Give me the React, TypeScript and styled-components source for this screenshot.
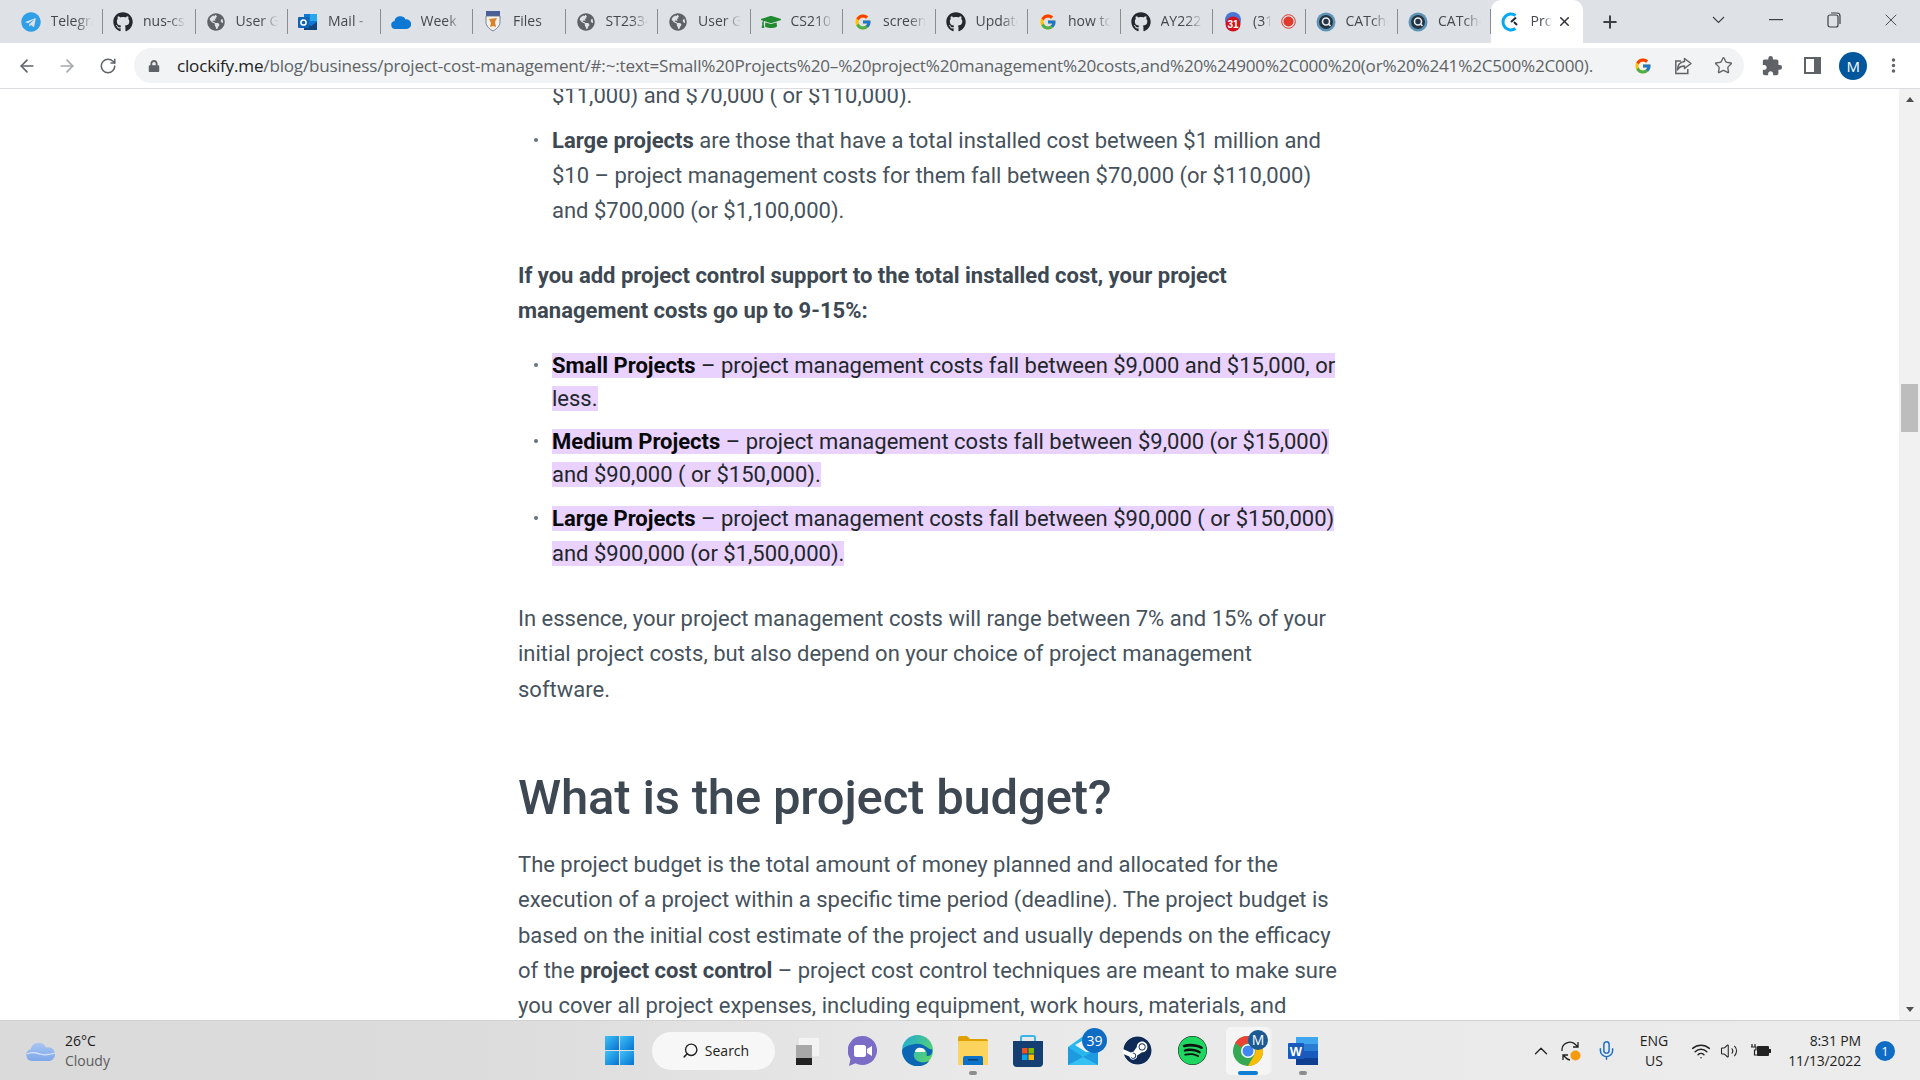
import React from "react";
import styled, { createGlobalStyle } from "styled-components";
import { ArrowLeft, ArrowRight, ChevronUp, EllipsisVertical, Mic, Plus, RotateCw, Search, Star, Volume2, Wifi, X } from "lucide-react";
import { FaGithub, FaGlobeAmericas, FaGraduationCap, FaLock, FaSpotify, FaSteam, FaTelegram } from "react-icons/fa";
import { FcGoogle } from "react-icons/fc";

const GlobalStyle = createGlobalStyle`
  html, body {
    margin: 0;
    height: 100%;
    overflow: hidden;
    background: #fff;
  }
  #root {
    height: 100%;
  }
`;

const Page = styled.div`
  width: 1920px;
  height: 1080px;
  display: flex;
  flex-direction: column;
  font-family: "Open Sans", "Noto Sans", sans-serif;
  overflow: hidden;
`;

/* ---------- browser chrome ---------- */

const TabStrip = styled.div`
  height: 43px;
  flex: none;
  display: flex;
  align-items: stretch;
  padding-left: 10.5px;
  background: #dee1e6;
`;

const Tab = styled.div<{ $active?: boolean }>`
  position: relative;
  width: 92.5px;
  flex: none;
  box-sizing: border-box;
  display: flex;
  align-items: center;
  gap: 10px;
  padding: 0 ${(p) => (p.$active ? "11px" : "10px")} 0 10px;
  background: ${(p) => (p.$active ? "#fff" : "transparent")};
  border-radius: ${(p) => (p.$active ? "10px 10px 0 0" : "0")};
  &::after {
    content: "";
    display: ${(p) => (p.$active ? "none" : "block")};
    position: absolute;
    right: 0;
    top: 9px;
    bottom: 9px;
    width: 1px;
    background: #8a8d91;
  }
`;

const TabIcon = styled.span`
  width: 20px;
  height: 20px;
  flex: none;
  display: flex;
  align-items: center;
  justify-content: center;
`;

const TabLabel = styled.span`
  flex: 1;
  min-width: 0;
  padding-bottom: 2px;
  overflow: hidden;
  white-space: nowrap;
  font-size: 14px;
  color: #45494e;
  -webkit-mask-image: linear-gradient(90deg, #000 60%, transparent 100%);
  mask-image: linear-gradient(90deg, #000 60%, transparent 100%);
`;

const TabClose = styled.span`
  width: 16px;
  flex: none;
  display: flex;
  justify-content: center;
  margin-left: -6px;
  color: #303134;
`;

const NewTab = styled.div`
  width: 54px;
  flex: none;
  display: flex;
  align-items: center;
  justify-content: center;
  color: #3c4043;
`;

const WindowControls = styled.div`
  margin-left: auto;
  display: flex;
  padding-bottom: 4px;
`;

const WindowButton = styled.div`
  width: 57.5px;
  display: flex;
  align-items: center;
  justify-content: center;
  color: #3c4043;
`;

const Toolbar = styled.div`
  height: 45px;
  flex: none;
  box-sizing: border-box;
  display: flex;
  align-items: center;
  padding-left: 6.5px;
  background: #fff;
  color: #5f6368;
`;

const ToolButton = styled.div<{ $faded?: boolean }>`
  width: 40.5px;
  flex: none;
  display: flex;
  align-items: center;
  justify-content: center;
  color: ${(p) => (p.$faded ? "#a5a8ac" : "#5f6368")};
`;

const AddressBar = styled.div`
  width: 1610px;
  height: 35px;
  flex: none;
  box-sizing: border-box;
  margin: 0 8px 0 6px;
  padding: 0 0 0 14px;
  display: flex;
  align-items: center;
  border-radius: 18px;
  background: #f1f3f4;
`;

const Url = styled.div`
  flex: 1;
  min-width: 0;
  margin-left: 17px;
  white-space: nowrap;
  overflow: hidden;
  font-size: 17.1px;
  letter-spacing: -0.2px;
  color: #5f6368;
  b {
    font-weight: 400;
    color: #202124;
  }
`;

const Avatar = styled.div`
  width: 28px;
  height: 28px;
  border-radius: 50%;
  display: flex;
  align-items: center;
  justify-content: center;
  font-size: 15px;
  color: #fff;
  background: #02569b;
`;

/* ---------- page content ---------- */

const Viewport = styled.div`
  flex: 1;
  min-height: 0;
  display: flex;
  border-top: 1px solid #dadce0;
  overflow: hidden;
  background: #fff;
`;

const ArticleArea = styled.div`
  flex: 1;
  min-width: 0;
  padding-left: 518px;
`;

const Article = styled.article`
  width: 824px;
  margin-top: -11.5px;
  font-family: Roboto, "Noto Sans", sans-serif;
  font-size: 22px;
  line-height: 35.3px;
  color: #46525c;
`;

const Paragraph = styled.p<{ $top?: number }>`
  margin: ${(p) => p.$top ?? 29}px 0 0;
`;

const StrongLead = styled.strong`
  font-weight: 700;
  color: #3d4852;
`;

const BulletList = styled.ul<{ $top?: number }>`
  list-style: none;
  margin: ${(p) => p.$top ?? 10}px 0 0;
  padding: 0 0 0 34px;
`;

const Bullet = styled.li<{ $line?: number; $plain?: boolean }>`
  position: relative;
  margin-top: 10px;
  line-height: ${(p) => p.$line ?? 35.3}px;
  &:first-child {
    margin-top: 0;
  }
  &::before {
    content: "";
    display: ${(p) => (p.$plain ? "none" : "block")};
    position: absolute;
    left: -18px;
    top: ${(p) => ((p.$line ?? 35.3) - 5) / 2}px;
    width: 4px;
    height: 4px;
    border-radius: 50%;
    background: #66727b;
  }
`;

const Mark = styled.mark`
  background: #e9d2fd;
  color: #22262a;
  strong {
    color: #08090a;
  }
`;

const Heading = styled.h2`
  margin: 61px 0 19px;
  font-size: 49px;
  line-height: 60px;
  letter-spacing: -0.18px;
  font-weight: 500;
  color: #3d4852;
`;

const ScrollBar = styled.div`
  width: 21px;
  flex: none;
  display: flex;
  flex-direction: column;
  align-items: center;
  background: #f1f1f1;
`;

const ScrollArrow = styled.div<{ $down?: boolean }>`
  width: 0;
  height: 0;
  margin-top: ${(p) => (p.$down ? "auto" : "8px")};
  margin-bottom: ${(p) => (p.$down ? "8px" : "0")};
  border-left: 4.5px solid transparent;
  border-right: 4.5px solid transparent;
  border-bottom: ${(p) => (p.$down ? "0" : "5px solid #505050")};
  border-top: ${(p) => (p.$down ? "5px solid #505050" : "0")};
`;

const ScrollThumb = styled.div`
  width: 17px;
  height: 48px;
  margin-top: 282px;
  background: #bdbdbd;
`;

/* ---------- taskbar ---------- */

const Taskbar = styled.div`
  height: 60px;
  flex: none;
  box-sizing: border-box;
  display: flex;
  align-items: center;
  border-top: 1px solid #d2d2d2;
  background: linear-gradient(90deg, #dadada 0%, #dcdcdc 25%, #e9e9e9 50%, #ececec 100%);
  font-family: "Open Sans", "Noto Sans", sans-serif;
`;

const Weather = styled.div`
  width: 605px;
  flex: none;
  box-sizing: border-box;
  padding-left: 26px;
  display: flex;
  align-items: center;
  gap: 9px;
`;

const WeatherText = styled.div`
  font-size: 14px;
  line-height: 20px;
  color: #1c1c1c;
  span {
    display: block;
    color: #5c5c5c;
  }
`;

const SearchPill = styled.div`
  width: 123px;
  height: 38px;
  flex: none;
  box-sizing: border-box;
  margin: 0 5px 0 18px;
  padding-left: 4px;
  display: flex;
  align-items: center;
  justify-content: center;
  gap: 6px;
  border-radius: 19px;
  background: #f7f7f7;
  font-size: 14px;
  color: #222;
`;

const AppSlot = styled.div<{ $running?: boolean; $focused?: boolean }>`
  position: relative;
  width: 55px;
  height: 48px;
  flex: none;
  display: flex;
  align-items: center;
  justify-content: center;
  &::before {
    content: "";
    display: ${(p) => (p.$focused ? "block" : "none")};
    position: absolute;
    inset: 0 5px 0 6px;
    border-radius: 5px;
    background: #f5f5f5;
    box-shadow: 3px 0 0 -1px #f0f0f0;
  }
  &::after {
    content: "";
    display: ${(p) => (p.$running || p.$focused ? "block" : "none")};
    position: absolute;
    bottom: 0;
    left: 50%;
    width: ${(p) => (p.$focused ? 20 : 8)}px;
    height: 4px;
    margin-left: ${(p) => (p.$focused ? -10 : -4)}px;
    border-radius: 2px;
    background: ${(p) => (p.$focused ? "#0f7fd6" : "#8d8d8d")};
  }
  > * {
    position: relative;
    z-index: 1;
  }
`;

const Badge = styled.span<{ $size: number; $bg: string; $right: number; $top: number }>`
  position: absolute;
  z-index: 2;
  right: ${(p) => p.$right}px;
  top: ${(p) => p.$top}px;
  width: ${(p) => p.$size}px;
  height: ${(p) => p.$size}px;
  border-radius: 50%;
  display: flex;
  align-items: center;
  justify-content: center;
  background: ${(p) => p.$bg};
  color: #fff;
  font-size: 14px;
`;

const RoundIcon = styled.span<{ $bg: string; $color: string }>`
  width: 29px;
  height: 29px;
  border-radius: 50%;
  display: flex;
  align-items: center;
  justify-content: center;
  background: ${(p) => p.$bg};
  color: ${(p) => p.$color};
`;

const Tray = styled.div`
  margin-left: auto;
  padding-right: 11px;
  display: flex;
  align-items: center;
  color: #222;
`;

const TrayItem = styled.div<{ $w: number }>`
  width: ${(p) => p.$w}px;
  flex: none;
  display: flex;
  align-items: center;
  justify-content: center;
`;

const Lang = styled.div`
  font-size: 14px;
  line-height: 20px;
  text-align: center;
  color: #1f1f1f;
`;

const Clock = styled.div`
  width: 77px;
  flex: none;
  font-size: 14px;
  line-height: 20px;
  letter-spacing: -0.15px;
  text-align: right;
  white-space: nowrap;
  color: #1f1f1f;
`;

const NotifyDot = styled.div`
  width: 20px;
  height: 20px;
  border-radius: 50%;
  display: flex;
  align-items: center;
  justify-content: center;
  background: #0f6cc4;
  color: #fff;
  font-size: 13px;
`;

/* ---------- drawn icons ---------- */

const OutlookIcon = () => (
  <svg width="20" height="20" viewBox="0 0 20 20">
    <rect x="6" y="2" width="13" height="15" fill="#0f78d4" />
    <rect x="12" y="2" width="7" height="7" fill="#28a8ea" />
    <path d="M6 10l7 4 6-4v8H6z" fill="#14447d" />
    <rect x="0" y="5" width="11" height="11" rx="1" fill="#0f65b5" />
    <circle cx="5.5" cy="10.5" r="2.6" fill="none" stroke="#fff" strokeWidth="1.5" />
  </svg>
);

const CloudIcon = () => (
  <svg width="20" height="14" viewBox="0 0 20 14">
    <path d="M4 14a4 4 0 0 1-.6-7.9A6 6 0 0 1 14.6 4.4 4.8 4.8 0 0 1 16 14z" fill="#0f78d4" />
  </svg>
);

const CrestIcon = () => (
  <svg width="16" height="21" viewBox="0 0 16 21">
    <rect x="1" y="0" width="14" height="5" fill="#4a5f96" />
    <path d="M1 5h14v6c0 4-3.500 7-7 9-3.500-2-7-5-7-9z" fill="#f5f1e6" stroke="#5a6a8a" strokeWidth="0.800" />
    <path d="M4 8l8-1-2 4 1 5-3-1-3 1 1-4z" fill="#d9822b" />
  </svg>
);

const CalendarIcon = () => (
  <svg width="20" height="20" viewBox="0 0 20 20">
    <circle cx="10" cy="8" r="8" fill="#4a76d8" />
    <circle cx="10" cy="12" r="7.500" fill="#d3121e" />
    <text x="10" y="16" textAnchor="middle" fontSize="10" fontWeight="700" fill="#fff" fontFamily="Liberation Sans, sans-serif">31</text>
  </svg>
);

const CatcherIcon = () => (
  <svg width="20" height="20" viewBox="0 0 20 20">
    <circle cx="10" cy="10" r="9.500" fill="#5d93b5" />
    <circle cx="10" cy="10" r="7" fill="#243443" />
    <circle cx="10" cy="9.500" r="3.500" fill="none" stroke="#e8eef2" strokeWidth="1.600" />
    <path d="M12.500 12l2 2" stroke="#e8eef2" strokeWidth="1.600" />
  </svg>
);

const ClockifyIcon = () => (
  <svg width="20" height="20" viewBox="0 0 20 20">
    <path d="M14.500 3.400A8 8 0 1 0 14.500 16.600" fill="none" stroke="#03a9f4" strokeWidth="3" />
    <path d="M10 10l5-4.500M13 10l3 3" stroke="#222d33" strokeWidth="2" />
  </svg>
);

const RecordDot = () => (
  <svg width="15" height="15" viewBox="0 0 15 15" style={{ flex: "none" }}>
    <circle cx="7.500" cy="7.500" r="6.800" fill="none" stroke="#e2392d" strokeWidth="1" />
    <circle cx="7.500" cy="7.500" r="5" fill="#e2392d" />
  </svg>
);

const ShareIcon = () => (
  <svg width="20" height="20" viewBox="0 0 20 20" fill="none" stroke="#5f6368" strokeWidth="1.500">
    <path d="M8 5H2.800v12.500h12V13" />
    <path d="M11.500 2.500L18 7.500l-6.500 5V10c-3.500 0-5.500 1-7 4 0-4.500 2.500-8 7-8.500z" strokeLinejoin="round" />
  </svg>
);

const ExtensionIcon = () => (
  <svg width="22" height="22" viewBox="0 0 24 24" fill="#5f6368">
    <path d="M20.500 11H19V7c0-1.100-.9-2-2-2h-4V3.500a2.500 2.500 0 0 0-5 0V5H4c-1.100 0-1.990.9-1.990 2v3.800H3.500c1.490 0 2.700 1.210 2.700 2.700s-1.210 2.700-2.700 2.700H2V20c0 1.100.9 2 2 2h3.800v-1.500c0-1.490 1.210-2.700 2.700-2.700 1.490 0 2.700 1.210 2.700 2.700V22H17c1.100 0 2-.9 2-2v-4h1.500a2.500 2.500 0 0 0 0-5z" />
  </svg>
);

const PanelIcon = () => (
  <svg width="17" height="17" viewBox="0 0 17 17">
    <rect x="0" y="0" width="17" height="17" fill="#5f6368" />
    <rect x="2" y="2" width="8" height="13" fill="#fff" />
  </svg>
);

const RestoreIcon = () => (
  <svg width="14" height="16" viewBox="0 0 14 16" fill="none" stroke="#3c4043" strokeWidth="1.200">
    <rect x="1" y="3" width="10" height="12" rx="2" />
    <path d="M4 1h6a3 3 0 0 1 3 3v8" />
  </svg>
);

const TabsChevron = () => (
  <svg width="13" height="8" viewBox="0 0 13 8" fill="none" stroke="#3c4043" strokeWidth="1.100">
    <path d="M1 1l5.500 5.500L12 1" />
  </svg>
);

const WeatherCloud = () => (
  <svg width="30" height="20" viewBox="0 0 30 20">
    <defs>
      <linearGradient id="wc" x1="0" y1="0" x2="0" y2="1">
        <stop offset="0" stopColor="#a9c6f2" />
        <stop offset="1" stopColor="#7ea8e8" />
      </linearGradient>
    </defs>
    <path d="M6 20a6 6 0 0 1-1.200-11.800A8 8 0 0 1 20 6.500 6.800 6.800 0 0 1 24 20z" fill="url(#wc)" />
    <path d="M1 13c5-3 10-1 13 0s9 1 15-1" fill="none" stroke="#dbe7fa" strokeWidth="1.200" />
  </svg>
);

const StartLogo = () => (
  <svg width="29" height="29" viewBox="0 0 29 29" style={{ flex: "none" }}>
    <defs>
      <linearGradient id="wl" x1="0" y1="0" x2="1" y2="1">
        <stop offset="0" stopColor="#3fc1f7" />
        <stop offset="1" stopColor="#0673d0" />
      </linearGradient>
    </defs>
    <rect x="0" y="0" width="14" height="14" fill="url(#wl)" />
    <rect x="15" y="0" width="14" height="14" fill="url(#wl)" />
    <rect x="0" y="15" width="14" height="14" fill="url(#wl)" />
    <rect x="15" y="15" width="14" height="14" fill="url(#wl)" />
  </svg>
);

const TaskViewIcon = () => (
  <svg width="24" height="28" viewBox="0 0 24 28">
    <rect x="2" y="0" width="22" height="20" fill="#f3f3f3" stroke="#dcdcdc" />
    <rect x="0" y="8" width="16" height="20" fill="#a8a8a8" />
    <rect x="0" y="21" width="16" height="7" fill="#222" />
  </svg>
);

const TeamsIcon = () => (
  <svg width="29" height="30" viewBox="0 0 29 30">
    <path d="M14.500 0a14.500 14.500 0 1 1-7 27.200L1 30l1.500-7A14.500 14.500 0 0 1 14.500 0z" fill="#7b6cc6" />
    <rect x="6" y="9" width="12" height="12" rx="2.500" fill="#fff" />
    <path d="M19 13l5-3v10l-5-3z" fill="#fff" />
  </svg>
);

const EdgeIcon = () => (
  <svg width="31" height="31" viewBox="0 0 31 31">
    <defs>
      <linearGradient id="eg" x1="0" y1="0" x2="1" y2="0.600">
        <stop offset="0" stopColor="#21a8d8" />
        <stop offset="1" stopColor="#57d36f" />
      </linearGradient>
    </defs>
    <circle cx="15.500" cy="15.500" r="15.500" fill="url(#eg)" />
    <path d="M0 16C1 28 12 34 22 30c2-1 4-2 5-4-6 3-13 1-15-4-1-4 1-7 5-8 3-1 6 0 7 2 2 3-1 5 2 5 3 0 5-3 4-7-3 2-8-7-17-5C6 10 1 12 0 16z" fill="#0c66b5" />
    <path d="M13 17c0-3 3-5 6-4 3 0 4 2 4 3s-1 1-1 1h-9z" fill="#fff" />
  </svg>
);

const FolderIcon = () => (
  <svg width="30" height="29" viewBox="0 0 30 29">
    <path d="M0 2a2 2 0 0 1 2-2h7l3 3h16a2 2 0 0 1 2 2v3H0z" fill="#e0a100" />
    <rect x="0" y="5" width="30" height="24" rx="1" fill="#fcd35c" />
    <path d="M5 28v-6a2 2 0 0 1 2-2h16a2 2 0 0 1 2 2v7H5z" fill="#0a72c8" />
    <rect x="10" y="23" width="10" height="1.500" fill="#083f73" />
  </svg>
);

const StoreIcon = () => (
  <svg width="30" height="32" viewBox="0 0 30 32">
    <path d="M8 6V2.500A1.500 1.500 0 0 1 9.500 1h11A1.500 1.500 0 0 1 22 2.500V6" fill="none" stroke="#3bb6ea" strokeWidth="2" />
    <path d="M0 6h30v22a4 4 0 0 1-4 4H4a4 4 0 0 1-4-4z" fill="#153f72" />
    <rect x="9" y="13" width="5.500" height="5.500" fill="#f25022" />
    <rect x="15.500" y="13" width="5.500" height="5.500" fill="#7fba00" />
    <rect x="9" y="19.500" width="5.500" height="5.500" fill="#00a4ef" />
    <rect x="15.500" y="19.500" width="5.500" height="5.500" fill="#ffb900" />
  </svg>
);

const MailIcon = () => (
  <svg width="30" height="29" viewBox="0 0 30 29">
    <path d="M0 11L14 1h16v28H0z" fill="#29b6ee" />
    <path d="M7 9l14-8 9 14-12 1z" fill="#eef3f7" />
    <path d="M0 11l15 10L30 13v16H0z" fill="#1e9ae0" />
    <path d="M0 29l15-8 15 8z" fill="#37c1f2" />
  </svg>
);

const ChromeIcon = () => (
  <svg width="30" height="30" viewBox="0 0 30 30">
    <circle cx="15" cy="15" r="15" fill="#34a853" />
    <path d="M15 0a15 15 0 0 1 13 7.500H15a7.500 7.500 0 0 0-6.500 3.750L2 7A15 15 0 0 1 15 0z" fill="#ea4335" />
    <path d="M28 7.500A15 15 0 0 1 15 30l6.500-11.250A7.500 7.500 0 0 0 15 7.500z" fill="#fbbc04" />
    <circle cx="15" cy="15" r="7" fill="#fff" />
    <circle cx="15" cy="15" r="5.500" fill="#4285f4" />
  </svg>
);

const WordIcon = () => (
  <svg width="30" height="28" viewBox="0 0 30 28">
    <rect x="8" y="0" width="22" height="7" fill="#41a5ee" />
    <rect x="8" y="7" width="22" height="7" fill="#2b7cd3" />
    <rect x="8" y="14" width="22" height="7" fill="#185abd" />
    <rect x="8" y="21" width="22" height="7" fill="#103f91" />
    <rect x="0" y="6" width="16" height="16" rx="1" fill="#185abd" />
    <text x="8" y="19" textAnchor="middle" fontSize="13" fontWeight="700" fill="#fff" fontFamily="Liberation Sans, sans-serif">W</text>
  </svg>
);

const SyncIcon = () => (
  <svg width="22" height="22" viewBox="0 0 22 22" fill="none" stroke="#222" strokeWidth="1.300">
    <path d="M2 11a8 8 0 0 1 14-6l2 2M18 2v5h-5" />
    <path d="M3 15l2 2a8 8 0 0 0 5 3M3 20v-5h5" />
    <circle cx="15.500" cy="15.500" r="5" fill="#f59a0c" stroke="none" />
  </svg>
);

const PlugIcon = () => (
  <svg width="20" height="14" viewBox="0 0 20 14">
    <path d="M1 0v3M4 0v3M0 3h5v3H3.500v5H7" fill="none" stroke="#222" strokeWidth="1.200" />
    <rect x="6" y="2" width="12" height="10" rx="1" fill="#222" />
    <rect x="18" y="5" width="2" height="4" fill="#222" />
  </svg>
);

const tabs: { icon: React.ReactNode; label: string; extra?: React.ReactNode }[] = [
  { icon: <FaTelegram size={20} color="#2f9fe8" />, label: "Telegram" },
  { icon: <FaGithub size={20} color="#24292f" />, label: "nus-cs" },
  { icon: <FaGlobeAmericas size={18} color="#5f6368" />, label: "User G" },
  { icon: <OutlookIcon />, label: "Mail -" },
  { icon: <CloudIcon />, label: "Week" },
  { icon: <CrestIcon />, label: "Files" },
  { icon: <FaGlobeAmericas size={18} color="#5f6368" />, label: "ST2334" },
  { icon: <FaGlobeAmericas size={18} color="#5f6368" />, label: "User G" },
  { icon: <FaGraduationCap size={20} color="#1f8a2e" />, label: "CS210" },
  { icon: <FcGoogle size={18} />, label: "screen" },
  { icon: <FaGithub size={20} color="#24292f" />, label: "Update" },
  { icon: <FcGoogle size={18} />, label: "how to" },
  { icon: <FaGithub size={20} color="#24292f" />, label: "AY222" },
  { icon: <CalendarIcon />, label: "(31", extra: <RecordDot /> },
  { icon: <CatcherIcon />, label: "CATcher" },
  { icon: <CatcherIcon />, label: "CATcher" },
];

function BrowserChrome() {
  return (
    <>
      <TabStrip>
        {tabs.map((tab, index) => (
          <Tab key={index}>
            <TabIcon>{tab.icon}</TabIcon>
            <TabLabel>{tab.label}</TabLabel>
            {tab.extra}
          </Tab>
        ))}
        <Tab $active>
          <TabIcon>
            <ClockifyIcon />
          </TabIcon>
          <TabLabel>Project</TabLabel>
          <TabClose>
            <X size={15} strokeWidth={2.4} />
          </TabClose>
        </Tab>
        <NewTab>
          <Plus size={20} strokeWidth={2.4} />
        </NewTab>
        <WindowControls>
          <WindowButton>
            <TabsChevron />
          </WindowButton>
          <WindowButton>
            <svg width="14" height="2" viewBox="0 0 14 2">
              <rect width="14" height="1.200" fill="#3c4043" />
            </svg>
          </WindowButton>
          <WindowButton>
            <RestoreIcon />
          </WindowButton>
          <WindowButton>
            <X size={20} strokeWidth={1.1} />
          </WindowButton>
        </WindowControls>
      </TabStrip>
      <Toolbar>
        <ToolButton>
          <ArrowLeft size={20} strokeWidth={2} />
        </ToolButton>
        <ToolButton $faded>
          <ArrowRight size={20} strokeWidth={2} />
        </ToolButton>
        <ToolButton>
          <RotateCw size={18} strokeWidth={2} />
        </ToolButton>
        <AddressBar>
          <FaLock size={12} color="#5f6368" />
          <Url>
            <b>clockify.me</b>/blog/business/project-cost-management/#:~:text=Small%20Projects%20–%20project%20management%20costs,and%20%24900%2C000%20(or%20%241%2C500%2C000).
          </Url>
          <ToolButton>
            <FcGoogle size={18} />
          </ToolButton>
          <ToolButton>
            <ShareIcon />
          </ToolButton>
          <ToolButton>
            <Star size={19} strokeWidth={1.7} />
          </ToolButton>
        </AddressBar>
        <ToolButton>
          <ExtensionIcon />
        </ToolButton>
        <ToolButton>
          <PanelIcon />
        </ToolButton>
        <ToolButton>
          <Avatar>M</Avatar>
        </ToolButton>
        <ToolButton>
          <EllipsisVertical size={19} strokeWidth={2.4} />
        </ToolButton>
      </Toolbar>
    </>
  );
}

function ArticleBody() {
  return (
    <Article>
      <BulletList $top={0}>
        <Bullet $plain>$11,000) and $70,000 ( or $110,000).</Bullet>
        <Bullet>
          <StrongLead>Large projects</StrongLead> are those that have a total installed cost between $1 million and
          $10 – project management costs for them fall between $70,000 (or $110,000) and $700,000 (or $1,100,000).
        </Bullet>
      </BulletList>
      <Paragraph $top={29.4}>
        <StrongLead>
          If you add project control support to the total installed cost, your project management costs go up to 9-15%:
        </StrongLead>
      </Paragraph>
      <BulletList $top={20.1}>
        <Bullet $line={33}>
          <Mark>
            <strong>Small Projects</strong> – project management costs fall between $9,000 and $15,000, or less.
          </Mark>
        </Bullet>
        <Bullet $line={33}>
          <Mark>
            <strong>Medium Projects</strong> – project management costs fall between $9,000 (or $15,000) and $90,000 ( or
            $150,000).
          </Mark>
        </Bullet>
        <Bullet>
          <Mark>
            <strong>Large Projects</strong> – project management costs fall between $90,000 ( or $150,000) and $900,000 (or
            $1,500,000).
          </Mark>
        </Bullet>
      </BulletList>
      <Paragraph $top={29.8}>
        In essence, your project management costs will range between 7% and 15% of your initial project costs, but also
        depend on your choice of project management software.
      </Paragraph>
      <Heading>What is the project budget?</Heading>
      <Paragraph $top={0}>
        The project budget is the total amount of money planned and allocated for the execution of a project within a
        specific time period (deadline). The project budget is based on the initial cost estimate of the project and
        usually depends on the efficacy of the <StrongLead>project cost control</StrongLead> – project cost control
        techniques are meant to make sure you cover all project expenses, including equipment, work hours, materials, and
        other resources.
      </Paragraph>
    </Article>
  );
}

function WindowsTaskbar() {
  return (
    <Taskbar>
      <Weather>
        <WeatherCloud />
        <WeatherText>
          26°C
          <span>Cloudy</span>
        </WeatherText>
      </Weather>
      <StartLogo />
      <SearchPill>
        <Search size={17} strokeWidth={2} style={{ transform: "scaleX(-1)" }} />
        Search
      </SearchPill>
      <AppSlot>
        <TaskViewIcon />
      </AppSlot>
      <AppSlot>
        <TeamsIcon />
      </AppSlot>
      <AppSlot>
        <EdgeIcon />
      </AppSlot>
      <AppSlot $running>
        <FolderIcon />
      </AppSlot>
      <AppSlot>
        <StoreIcon />
      </AppSlot>
      <AppSlot>
        <MailIcon />
        <Badge $size={25} $bg="#0f6cc4" $right={3} $top={1}>
          39
        </Badge>
      </AppSlot>
      <AppSlot>
        <RoundIcon $bg="#fff" $color="#0e2a55">
          <FaSteam size={29} />
        </RoundIcon>
      </AppSlot>
      <AppSlot>
        <RoundIcon $bg="#111" $color="#1ed760">
          <FaSpotify size={29} />
        </RoundIcon>
      </AppSlot>
      <AppSlot $focused>
        <ChromeIcon />
        <Badge $size={20} $bg="#1c5a94" $right={7} $top={3}>
          M
        </Badge>
      </AppSlot>
      <AppSlot $running>
        <WordIcon />
      </AppSlot>
      <Tray>
        <TrayItem $w={30}>
          <ChevronUp size={22} strokeWidth={1.4} />
        </TrayItem>
        <TrayItem $w={30}>
          <SyncIcon />
        </TrayItem>
        <TrayItem $w={40}>
          <Mic size={21} strokeWidth={1.7} color="#1f6fc0" />
        </TrayItem>
        <TrayItem $w={56}>
          <Lang>
            ENG
            <br />
            US
          </Lang>
        </TrayItem>
        <TrayItem $w={38}>
          <Wifi size={20} strokeWidth={1.8} />
        </TrayItem>
        <TrayItem $w={18}>
          <Volume2 size={20} strokeWidth={1.4} />
        </TrayItem>
        <TrayItem $w={46}>
          <PlugIcon />
        </TrayItem>
        <Clock>
          8:31 PM
          <br />
          11/13/2022
        </Clock>
        <TrayItem $w={48}>
          <NotifyDot>1</NotifyDot>
        </TrayItem>
      </Tray>
    </Taskbar>
  );
}

export default function App() {
  return (
    <Page>
      <GlobalStyle />
      <BrowserChrome />
      <Viewport>
        <ArticleArea>
          <ArticleBody />
        </ArticleArea>
        <ScrollBar>
          <ScrollArrow />
          <ScrollThumb />
          <ScrollArrow $down />
        </ScrollBar>
      </Viewport>
      <WindowsTaskbar />
    </Page>
  );
}
